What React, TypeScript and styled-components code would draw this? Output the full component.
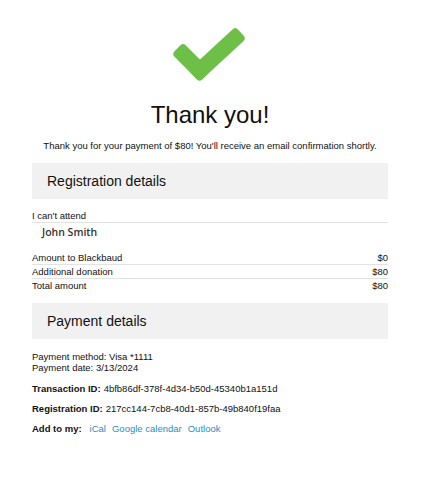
import styled, { createGlobalStyle } from "styled-components";

const Global = createGlobalStyle`
  body {
    margin: 0;
    background: #fff;
    font-family: "Liberation Sans", Arial, sans-serif;
    color: #111;
  }
`

const Page = styled.div`
  width: 356px;
  margin-left: 32px;
  padding-top: 24px;
  padding-bottom: 40px;
`

const Hero = styled.div`
  display: flex;
  flex-direction: column;
  align-items: center;
`

const Check = styled.svg`
  display: block;
  width: 80px;
  height: 62px;
  margin-left: -2px;
`

const Title = styled.h1`
  margin: 15px 0 0;
  font-size: 24px;
  line-height: 28px;
  font-weight: 400;
`

const Lead = styled.p`
  margin: 10px 0 0;
  font-size: 9.5px;
  line-height: 13px;
  text-align: center;
`

const SectionHead = styled.div<{ $top: number }>`
  margin-top: ${(p) => p.$top}px;
  height: 36px;
  display: flex;
  align-items: center;
  padding-left: 15px;
  background: #f1f1f1;
  font-size: 14px;
`

const Row = styled.div<{ $line?: boolean }>`
  display: flex;
  justify-content: space-between;
  font-size: 9.5px;
  line-height: 13px;
  border-bottom: 1px solid ${(p) => (p.$line ? "#e2e2e2" : "transparent")};
`

const Attend = styled(Row)`
  margin-top: 11px;
  line-height: 12px;
`

const Attendee = styled.div`
  font-family: "Open Sans", sans-serif;
  font-weight: 600;
  font-size: 10.5px;
  line-height: 14px;
  color: #333;
  padding-left: 10px;
  margin: 2px 0 12px;
`

const Info = styled.div`
  margin-top: 12px;
  font-size: 9.5px;
  line-height: 11px;
`

const Line = styled.div<{ $top: number }>`
  margin-top: ${(p) => p.$top}px;
  font-size: 9.5px;
  line-height: 13px;
  display: flex;
  align-items: baseline;
`

const Label = styled.b`
  font-weight: 700;
  margin-right: 3px;
`

const Links = styled.span`
  display: flex;
  gap: 6px;
  margin-left: 5px;
`

const Link = styled.a`
  color: #2a8cc4;
  text-decoration: none;
`

const amounts = [
  { label: "Amount to Blackbaud", value: "$0" },
  { label: "Additional donation", value: "$80" },
  { label: "Total amount", value: "$80" },
]

const App = () => {
  return (
    <Page>
      <Global />
      <Hero>
        <Check viewBox="0 0 80 62">
          <rect x="-8" y="-8" width="39.6" height="16" rx="4" fill="#6dbf47" transform="translate(14 30) rotate(45)" />
          <rect x="-8" y="-8" width="64.1" height="16" rx="4" fill="#6dbf47" transform="translate(30.7 46.7) rotate(-42.8)" />
        </Check>
        <Title>Thank you!</Title>
        <Lead>Thank you for your payment of $80! You'll receive an email confirmation shortly.</Lead>
      </Hero>

      <SectionHead $top={11}>Registration details</SectionHead>
      <Attend $line>I can't attend</Attend>
      <Attendee>John Smith</Attendee>
      {amounts.map((a, i) => (
        <Row key={a.label} $line={i < amounts.length - 1}>
          <span>{a.label}</span>
          <span>{a.value}</span>
        </Row>
      ))}

      <SectionHead $top={10}>Payment details</SectionHead>
      <Info>
        <div>Payment method: Visa *1111</div>
        <div>Payment date: 3/13/2024</div>
      </Info>
      <Line $top={9}>
        <Label>Transaction ID:</Label>4bfb86df-378f-4d34-b50d-45340b1a151d
      </Line>
      <Line $top={7}>
        <Label>Registration ID:</Label>217cc144-7cb8-40d1-857b-49b840f19faa
      </Line>
      <Line $top={7}>
        <Label>Add to my:</Label>
        <Links>
          <Link href="#">iCal</Link>
          <Link href="#">Google calendar</Link>
          <Link href="#">Outlook</Link>
        </Links>
      </Line>
    </Page>
  )
}

export default App;
